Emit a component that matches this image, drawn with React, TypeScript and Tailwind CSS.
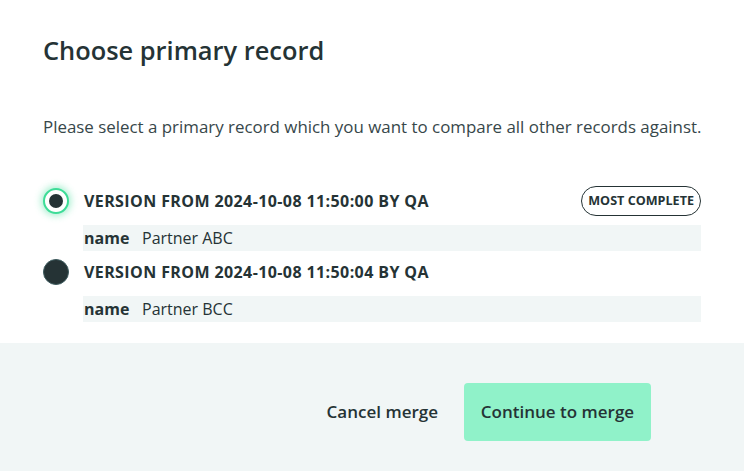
import React, { useState } from "react";

const records = [
  { id: "a", label: "VERSION FROM 2024-10-08 11:50:00 BY QA", name: "Partner ABC", badge: true },
  { id: "b", label: "VERSION FROM 2024-10-08 11:50:04 BY QA", name: "Partner BCC", badge: false },
];

const App = () => {
  const [selected, setSelected] = useState("a");

  return (
    <div className="w-[744px] h-[471px] bg-white text-[#253335] font-['Open_Sans',sans-serif] flex flex-col">
      <div className="px-[43px] pt-[34px] pb-[21px]">
        <h1 className="text-[25.4px] leading-[32px] font-semibold">Choose primary record</h1>
        <p className="mt-[49px] text-[16.9px] leading-[24px] whitespace-nowrap text-[#37474a]">
          Please select a primary record which you want to compare all other records against.
        </p>
        <div className="mt-[47px] flex flex-col gap-[6px]">
          {records.map((r) => (
            <div key={r.id}>
              <div className="flex items-center h-[30px]">
                <button
                  onClick={() => setSelected(r.id)}
                  className={
                    selected === r.id
                      ? "w-[26px] h-[26px] rounded-full border-2 border-[#3ddc97] bg-white flex items-center justify-center shadow-[0_0_7px_2px_rgba(61,220,151,0.45)]"
                      : "w-[26px] h-[26px] rounded-full bg-[#253335] border border-[#3d5b5e]"
                  }
                >
                  {selected === r.id && <span className="w-[14px] h-[14px] rounded-full bg-[#253335]" />}
                </button>
                <span className="ml-[15px] text-[16px] font-bold tracking-[0.4px]">{r.label}</span>
                {r.badge && (
                  <span className="ml-auto h-[30px] px-[6px] flex items-center rounded-full border border-[#253335] text-[12.6px] font-bold">
                    MOST COMPLETE
                  </span>
                )}
              </div>
              <div className="ml-[40px] mt-[9px] h-[26px] bg-[#f1f6f6] flex items-center px-[1px] text-[16px]">
                <span className="font-bold w-[58px]">name</span>
                <span>{r.name}</span>
              </div>
            </div>
          ))}
        </div>
      </div>
      <div className="flex-1 bg-[#f1f6f6] flex items-start pt-[40px] justify-end pr-[93px] gap-[26px]">
        <button className="h-[58px] text-[17px] font-semibold">Cancel merge</button>
        <button className="h-[58px] w-[187px] rounded-[4px] bg-[#90f2c9] text-[17px] font-semibold">
          Continue to merge
        </button>
      </div>
    </div>
  );
};

export default App;
